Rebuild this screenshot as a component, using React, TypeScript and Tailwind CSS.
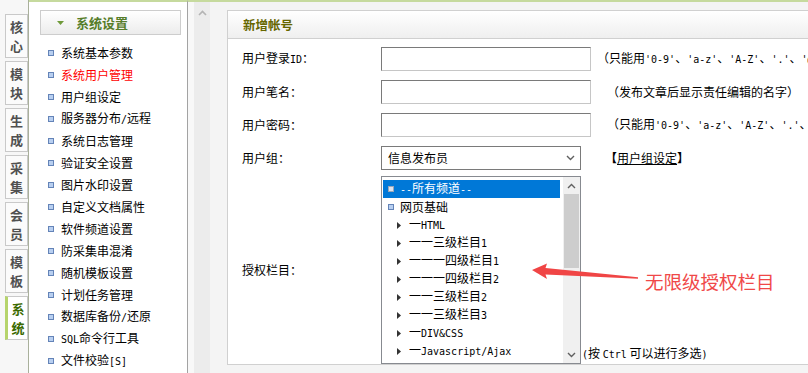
import type { ReactNode } from 'react';

const mono = "font-['DejaVu_Sans_Mono','Liberation_Mono',monospace] text-[10px]";

function M({ children }: { children: ReactNode }) {
  return <span className={mono}>{children}</span>;
}

const tabs = ['核心', '模块', '生成', '采集', '会员', '模板', '系统'];

const menu: ReactNode[] = [
  '系统基本参数',
  '系统用户管理',
  '用户组设定',
  <>服务器分布<M>/</M>远程</>,
  '系统日志管理',
  '验证安全设置',
  '图片水印设置',
  '自定义文档属性',
  '软件频道设置',
  '防采集串混淆',
  '随机模板设置',
  '计划任务管理',
  <>数据库备份<M>/</M>还原</>,
  <><M>SQL</M>命令行工具</>,
  <>文件校验<M>[S]</M></>,
];

const channels: { tri: boolean; text: ReactNode }[] = [
  { tri: false, text: <><M>--</M>所有频道<M>--</M></> },
  { tri: false, text: '网页基础' },
  { tri: true, text: <>一<M>HTML</M></> },
  { tri: true, text: <>一一三级栏目<M>1</M></> },
  { tri: true, text: <>一一一四级栏目<M>1</M></> },
  { tri: true, text: <>一一一四级栏目<M>2</M></> },
  { tri: true, text: <>一一三级栏目<M>2</M></> },
  { tri: true, text: <>一一三级栏目<M>3</M></> },
  { tri: true, text: <>一<M>DIV&amp;CSS</M></> },
  { tri: true, text: <>一<M>Javascript/Ajax</M></> },
];

function Chevron({ up }: { up?: boolean }) {
  return (
    <svg width="9" height="6" viewBox="0 0 9 6" className="block">
      <path d={up ? 'M1 5 L4.5 1.5 L8 5' : 'M1 1 L4.5 4.5 L8 1'} fill="none" stroke="#606060" strokeWidth="1.4" />
    </svg>
  );
}

function Rules() {
  return (
    <>
      <M>&apos;0-9&apos;</M>、<M>&apos;a-z&apos;</M>、<M>&apos;A-Z&apos;</M>、<M>&apos;.&apos;</M>、<M>&apos;@&apos;</M>、<M>&apos;_&apos;</M>及<M>&apos;-&apos;</M>）
    </>
  );
}

function FormRow({ label, children, h }: { label: ReactNode; children: ReactNode; h: string }) {
  return (
    <div className={`flex items-start ${h}`}>
      <div className="flex h-[24px] w-[139px] shrink-0 items-center">
        <span>{label}</span>
      </div>
      {children}
    </div>
  );
}

const inputCls =
  'h-[24px] w-[210px] shrink-0 border border-t-[#7a7a7a] border-l-[#7a7a7a] border-r-[#c6c6c6] border-b-[#c6c6c6] bg-white';

export default function App() {
  return (
    <div className="relative flex h-[373px] w-[808px] overflow-hidden bg-[#f4f4f4] font-['Noto_Sans_CJK_SC',sans-serif] text-[12px] leading-[16px] text-black">
      {/* tab strip */}
      <div className="flex w-[29px] shrink-0 flex-col gap-[3px] border-r border-[#a9b09b] bg-[#f7f7f7] pl-[5px] pt-[14px]">
        {tabs.map((t, i) => {
          const on = i === tabs.length - 1;
          return (
            <div
              key={t}
              className={`flex h-[44px] w-[23px] flex-col items-center justify-center gap-[5px] border text-[13px] font-bold leading-[14px] ${
                on
                  ? 'border-[#c9c9c9] border-l-[3px] border-l-[#b6d46c] bg-white pl-[1px] text-[#3b6a00]'
                  : 'border-[#c9c9c9] bg-[#fbfbfb] text-[#505050]'
              }`}
            >
              <span>{t[0]}</span>
              <span>{t[1]}</span>
            </div>
          );
        })}
      </div>

      {/* sidebar */}
      <div className="w-[159px] shrink-0 border-r border-t-2 border-r-[#a3a3a3] border-t-[#c6da9e] bg-white pt-[8px]">
        <div className="ml-[11px] flex h-[25px] w-[141px] items-center border border-[#cdcdcd] bg-gradient-to-b from-white to-[#ececec] pl-[16px]">
          <svg width="7" height="4" viewBox="0 0 7 4" className="mr-[12px]">
            <path d="M0 0 H7 L3.5 4 Z" fill="#6f9a3a" />
          </svg>
          <span className="text-[13px] font-bold text-[#567d2a]">系统设置</span>
        </div>
        <div className="pt-[7px]">
          {menu.map((m, i) => (
            <div key={i} className="flex h-[22px] items-center pl-[19px]">
              <span className="mr-[7px] h-[6px] w-[6px] border border-[#6484b8] bg-[#b8cff0]" />
              <span className={i === 1 ? 'text-[#ff0000]' : 'text-black'}>{m}</span>
            </div>
          ))}
        </div>
      </div>

      {/* frame gutter */}
      <div className="flex w-[39px] shrink-0 border-t-2 border-[#c6da9e]">
        <div className="w-[6px] bg-[#f8f8f8]" />
        <div className="flex w-[16px] justify-center bg-[#ececec] pt-[8px]">
          <svg width="9" height="6" viewBox="0 0 9 6">
            <path d="M1 5 L4.5 1.5 L8 5" fill="none" stroke="#b4b4b4" strokeWidth="1.6" />
          </svg>
        </div>
        <div className="w-[17px] bg-[#f4f4f4]" />
      </div>

      {/* main */}
      <div className="min-w-0 flex-1 border-t-2 border-[#c6da9e] pt-[8px]">
        <div className="w-[640px] border border-[#d0d0d0] bg-white">
          <div className="flex h-[28px] items-center border-b border-[#d0d0d0] bg-gradient-to-b from-white to-[#efefef] pl-[15px] text-[12.5px] font-bold text-[#666600]">
            新增帐号
          </div>
          <div className="pl-[14px] pt-[8px]">
            <FormRow h="h-[33px]" label={<>用户登录<M>ID</M>：</>}>
              <div className={inputCls} />
              <div className="flex h-[24px] items-center whitespace-nowrap pl-[6px]">
                <span>（只能用<Rules /></span>
              </div>
            </FormRow>
            <FormRow h="h-[33px]" label="用户笔名：">
              <div className={inputCls} />
              <div className="flex h-[24px] items-center whitespace-nowrap pl-[16px]">
                <span>（发布文章后显示责任编辑的名字）</span>
              </div>
            </FormRow>
            <FormRow h="h-[33px]" label="用户密码：">
              <div className={inputCls} />
              <div className="flex h-[24px] items-center whitespace-nowrap pl-[16px]">
                <span>（只能用<Rules /></span>
              </div>
            </FormRow>
            <FormRow h="h-[30px]" label="用户组：">
              <div className="flex h-[24px] w-[200px] shrink-0 items-center justify-between border border-[#7a7a7a] bg-white pl-[6px] pr-[5px]">
                <span>信息发布员</span>
                <Chevron />
              </div>
              <div className="flex h-[24px] items-center whitespace-nowrap pl-[24px] font-bold">
                <span>
                  【<span className="font-normal underline">用户组设定</span>】
                </span>
              </div>
            </FormRow>
            <div className="flex items-center">
              <div className="w-[139px] shrink-0">授权栏目：</div>
              <div className="flex h-[188px] w-[200px] shrink-0 border border-[#878a90] bg-white">
                <div className="flex-1 pl-[1px] pr-[3px] pt-[3px]">
                  {channels.map((c, i) => (
                    <div
                      key={i}
                      className={`flex h-[18px] items-center whitespace-nowrap ${
                        i === 0 ? 'bg-[#0078d7] text-white' : ''
                      } ${c.tri ? 'pl-[14px]' : 'pl-[5px]'}`}
                    >
                      {c.tri ? (
                        <svg width="4" height="7" viewBox="0 0 4 7" className="mr-[8px]">
                          <path d="M0 0 L4 3.5 L0 7 Z" fill="#333" />
                        </svg>
                      ) : (
                        <span
                          className={`mr-[6px] h-[6px] w-[6px] border ${
                            i === 0 ? 'border-[#9aa6b8] bg-[#dde4ee]' : 'border-[#6484b8] bg-[#b8cff0]'
                          }`}
                        />
                      )}
                      <span>{c.text}</span>
                    </div>
                  ))}
                </div>
                <div className="flex w-[17px] flex-col bg-[#f0f0f0]">
                  <div className="flex h-[17px] items-center justify-center">
                    <Chevron up />
                  </div>
                  <div className="mx-[1px] h-[74px] bg-[#cdcdcd]" />
                  <div className="flex-1" />
                  <div className="flex h-[17px] items-center justify-center">
                    <Chevron />
                  </div>
                </div>
              </div>
              <div className="self-end whitespace-nowrap pb-[1px] pl-[1px]">
                <M>(</M>按 <M>Ctrl</M> 可以进行多选<M>)</M>
              </div>
            </div>
          </div>
        </div>
      </div>

      {/* annotation */}
      <svg className="pointer-events-none absolute left-0 top-0" width="808" height="373">
        <polygon
          points="532,270 547,263.5 545.5,268 638,277.3 638,278.7 545.5,274.5 547,279"
          fill="#f04545"
        />
      </svg>
      <div className="pointer-events-none absolute left-[645px] top-[269px] whitespace-nowrap text-[18.5px] leading-[24px] text-[#f04848]">
        无限级授权栏目
      </div>
    </div>
  );
}
